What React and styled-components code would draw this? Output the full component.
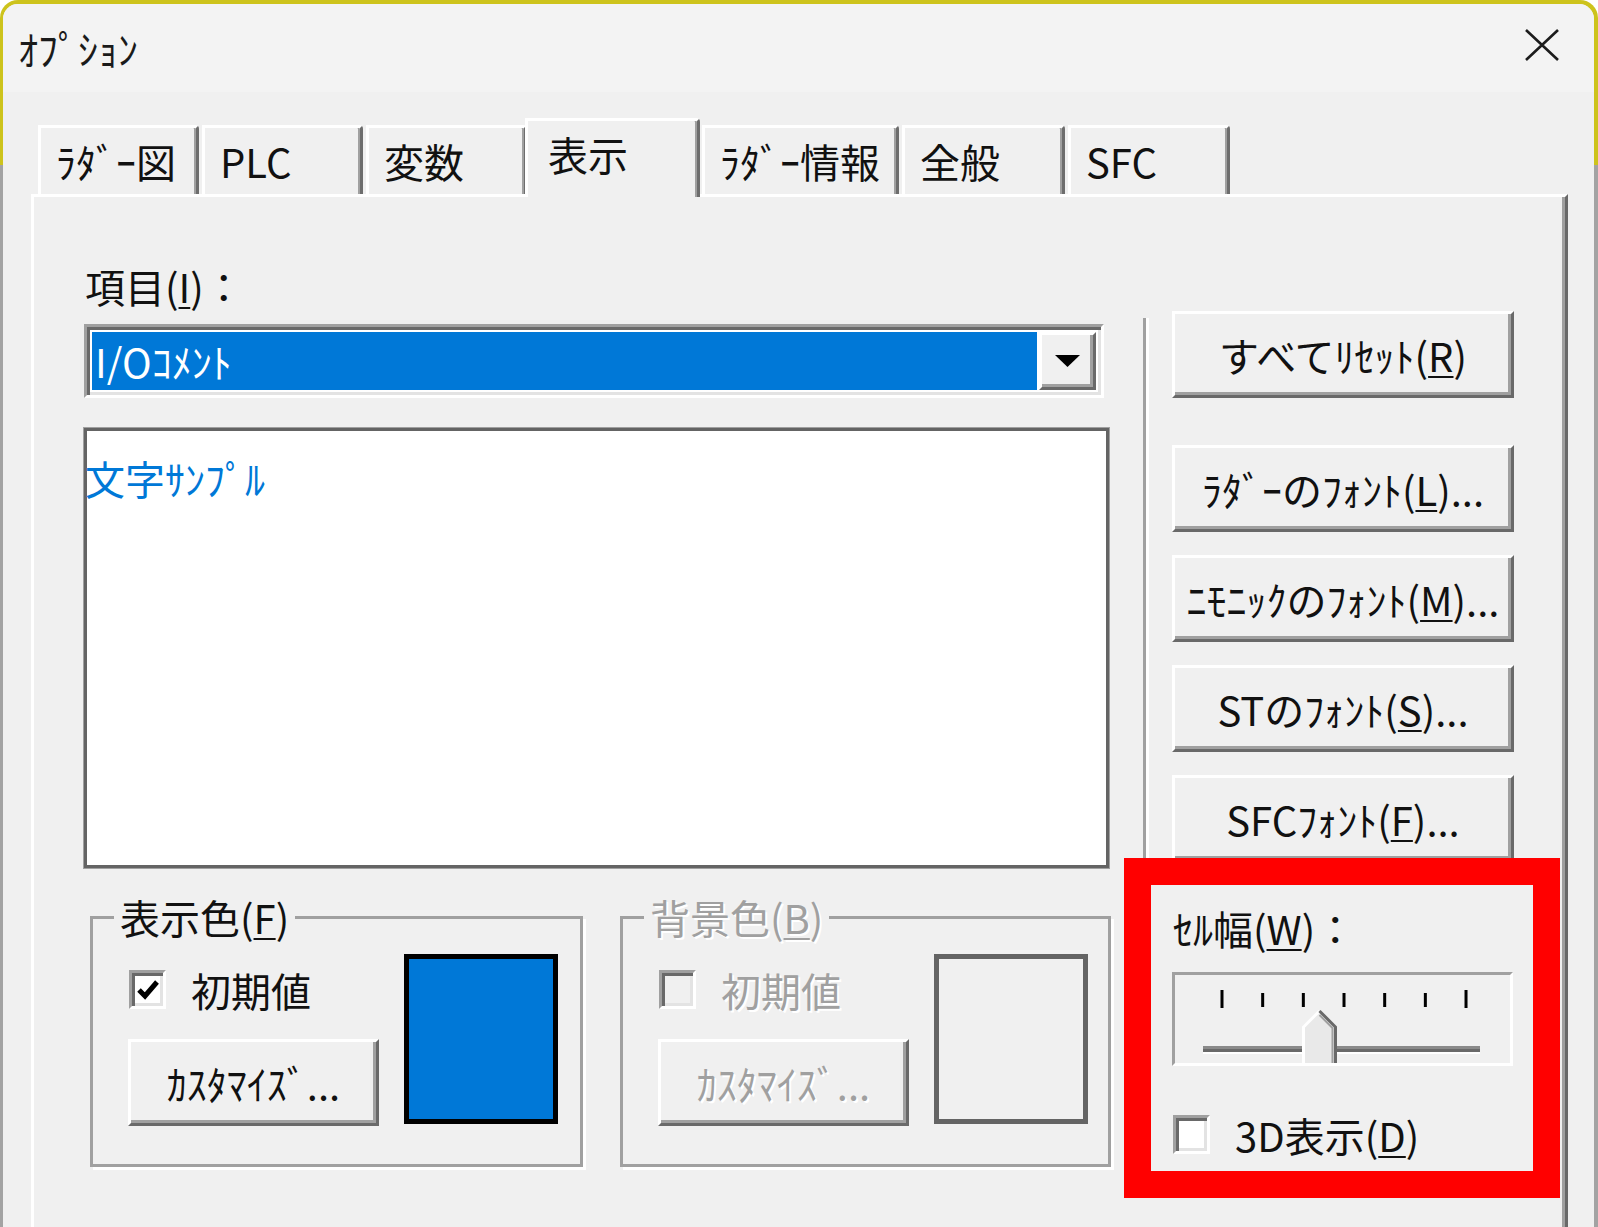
import React from "react";
import styled, { createGlobalStyle, css } from "styled-components";

const FONT = `"Noto Sans CJK JP", "Noto Sans", sans-serif`;

const GlobalStyle = createGlobalStyle`
  * { box-sizing: border-box; }
  html, body { margin: 0; padding: 0; background: #ffffff; }
  body {
    width: 1598px;
    height: 1227px;
    overflow: hidden;
    font-family: ${FONT};
  }
`;

const raised = css`
  border: 3px solid;
  border-color: #ffffff #696969 #696969 #ffffff;
  box-shadow: inset -3px -3px 0 #a0a0a0;
`;

const sunken = css`
  border: 3px solid;
  border-color: #a0a0a0 #ffffff #ffffff #a0a0a0;
  box-shadow: inset 3px 3px 0 #696969, inset -3px -3px 0 #e3e3e3;
`;

const disabledText = css`
  color: #a0a0a0;
  text-shadow: 2px 2px 0 #ffffff;
`;

const Frame = styled.div`
  width: 1598px;
  height: 1227px;
  padding: 4px 4px 0 3px;
  border-radius: 18px 18px 0 0;
  background: linear-gradient(to bottom, #cdc31c 0, #cdc31c 165px, #a3a3a3 165px);
  overflow: hidden;
`;

const Window = styled.div`
  height: 100%;
  background: #f0f0f0;
  border-radius: 15px 15px 0 0;
  overflow: hidden;
  display: flex;
  flex-direction: column;
`;

const TitleBar = styled.div`
  height: 88px;
  flex-shrink: 0;
  display: flex;
  align-items: center;
  justify-content: space-between;
  padding: 0 35px 0 15px;
  background: #f3f3f3;
  color: #1a1a1a;
  font-size: 40px;
  line-height: 1;
`;

const CloseIcon = styled.svg`
  width: 34px;
  height: 32px;
  margin-top: -6px;
`;

const TabStrip = styled.div`
  height: 102px;
  flex-shrink: 0;
  display: flex;
  align-items: flex-end;
  padding-left: 35px;
  position: relative;
  z-index: 1;
`;

const Tab = styled.div`
  width: ${(p) => p.$w}px;
  height: 69px;
  margin-right: 3px;
  padding-left: 15px;
  display: flex;
  align-items: center;
  font-size: 40px;
  line-height: 1;
  color: #111;
  background: #f0f0f0;
  border-top: 3px solid #ffffff;
  border-left: 3px solid #ffffff;
  border-right: 3px solid #6d6d6d;
  border-top-right-radius: 4px;
  box-shadow: inset -2px 0 0 #a0a0a0;
  white-space: nowrap;

  ${(p) =>
    p.$active &&
    css`
      height: 79px;
      margin: 0 2px -3px -5px;
      padding-left: 20px;
      padding-bottom: 10px;
      position: relative;
      z-index: 2;
    `}
`;

const Panel = styled.div`
  margin-left: 28px;
  width: 1537px;
  flex: 1;
  border-top: 3px solid #ffffff;
  border-left: 3px solid #ffffff;
  border-right: 3px solid #696969;
  box-shadow: inset -3px 0 0 #a0a0a0;
  padding-left: 50px;
`;

const TopRow = styled.div`
  display: flex;
  align-items: flex-start;
`;

const LeftCol = styled.div`
  width: 1025px;
  padding-top: 65px;
`;

const FieldLabel = styled.div`
  height: 48px;
  font-size: 40px;
  line-height: 48px;
  color: #111;
  margin-left: 1px;
  white-space: nowrap;

  u {
    text-decoration-thickness: 2px;
    text-underline-offset: 4px;
  }
`;

const Combo = styled.div`
  width: 1020px;
  height: 74px;
  margin-top: 14px;
  display: flex;
  padding: 5px;
  background: #ffffff;
  ${sunken};
`;

const ComboValue = styled.div`
  flex: 1;
  display: flex;
  align-items: center;
  padding-left: 3px;
  background: #0078d7;
  color: #ffffff;
  font-size: 40px;
  line-height: 1;
`;

const DropButton = styled.div`
  width: 57px;
  margin-left: 2px;
  display: flex;
  align-items: center;
  justify-content: center;
  background: #f0f0f0;
  ${raised};
`;

const ListBox = styled.div`
  width: 1025px;
  height: 440px;
  margin-top: 30px;
  background: #ffffff;
  border: 3px solid #646464;
  box-shadow: 0 0 0 1px #a0a0a0;
`;

const SampleText = styled.div`
  padding-top: 23px;
  margin-left: -2px;
  font-size: 40px;
  line-height: 48px;
  color: #0078d7;
`;

const Separator = styled.div`
  width: 6px;
  height: 543px;
  margin: 121px 0 0 34px;
  border-left: 3px solid #a0a0a0;
  border-right: 3px solid #ffffff;
`;

const RightCol = styled.div`
  width: 342px;
  margin-left: 23px;
  padding-top: 114px;
  display: flex;
  flex-direction: column;
  gap: 23px;

  & > :first-child {
    margin-bottom: 24px;
  }
`;

const Button = styled.div`
  width: ${(p) => p.$w || 342}px;
  height: 87px;
  display: flex;
  align-items: center;
  justify-content: center;
  background: #f0f0f0;
  font-size: 40px;
  line-height: 1;
  color: #111;
  white-space: nowrap;
  ${raised};
  ${(p) => p.$disabled && disabledText};

  u {
    text-decoration-thickness: 2px;
    text-underline-offset: 4px;
  }
`;

const BottomRow = styled.div`
  display: flex;
  align-items: flex-start;
`;

const GroupBox = styled.fieldset`
  width: ${(p) => p.$w}px;
  height: 274px;
  margin: 25px 0 0 ${(p) => p.$ml}px;
  padding: 13px 0 0 35px;
  border: 3px solid #a0a0a0;
  box-shadow: 3px 3px 0 #ffffff;
  min-width: 0;
`;

const Legend = styled.legend`
  margin-left: -14px;
  padding: 0 6px;
  font-size: 40px;
  line-height: 48px;
  color: #111;
  ${(p) => p.$disabled && disabledText};

  u {
    text-decoration-thickness: 2px;
    text-underline-offset: 4px;
  }
`;

const GroupInner = styled.div`
  display: flex;
  align-items: flex-start;
`;

const GroupStack = styled.div`
  width: 251px;
  padding-top: 16px;
  display: flex;
  flex-direction: column;
  gap: 30px;
`;

const CheckRow = styled.div`
  height: 39px;
  display: flex;
  align-items: center;
  margin-left: 1px;
`;

const CheckBox = styled.div`
  width: 37px;
  height: 39px;
  flex-shrink: 0;
  display: flex;
  align-items: center;
  justify-content: center;
  background: ${(p) => (p.$disabled ? "#f0f0f0" : "#ffffff")};
  ${sunken};
`;

const CheckLabel = styled.span`
  margin-left: 25px;
  font-size: 40px;
  line-height: 1;
  color: #111;
  white-space: nowrap;
  ${(p) => p.$disabled && disabledText};

  u {
    text-decoration-thickness: 2px;
    text-underline-offset: 4px;
  }
`;

const Swatch = styled.div`
  width: 154px;
  height: 170px;
  margin-left: 25px;
  background: ${(p) => p.$fill};
  border: 5px solid ${(p) => p.$edge};
`;

const CellGroup = styled.div`
  width: 341px;
  margin: 36px 0 0 61px;
  position: relative;

  &::after {
    content: "";
    position: absolute;
    top: -46px;
    left: -48px;
    right: -47px;
    bottom: -44px;
    border: 27px solid #ff0000;
    pointer-events: none;
  }
`;

const Trackbar = styled.div`
  width: 341px;
  height: 94px;
  margin-top: 20px;
  border: 3px solid;
  border-color: #a0a0a0 #ffffff #ffffff #a0a0a0;

  svg {
    display: block;
  }
`;

const CellCheckRow = styled(CheckRow)`
  margin-top: 49px;
`;

const tabs = [
  { label: "ﾗﾀﾞｰ図", w: 161 },
  { label: "PLC", w: 161 },
  { label: "変数", w: 161 },
  { label: "表示", w: 175, active: true },
  { label: "ﾗﾀﾞｰ情報", w: 197 },
  { label: "全般", w: 163 },
  { label: "SFC", w: 162 },
];

const fontButtons = [
  { pre: "すべてﾘｾｯﾄ(", key: "R", post: ")" },
  { pre: "ﾗﾀﾞｰのﾌｫﾝﾄ(", key: "L", post: ")..." },
  { pre: "ﾆﾓﾆｯｸのﾌｫﾝﾄ(", key: "M", post: ")..." },
  { pre: "STのﾌｫﾝﾄ(", key: "S", post: ")..." },
  { pre: "SFCﾌｫﾝﾄ(", key: "F", post: ")..." },
];

const Check = () => (
  <svg width="24" height="22" viewBox="0 0 24 22">
    <path d="M3 11 L9 17 L21 3" fill="none" stroke="#000" strokeWidth="5" />
  </svg>
);

const ColorGroup = ({ title, hotkey, checked, disabled, fill, edge, ml, w }) => (
  <GroupBox $ml={ml} $w={w}>
    <Legend $disabled={disabled}>
      {title}(<u>{hotkey}</u>)
    </Legend>
    <GroupInner>
      <GroupStack>
        <CheckRow>
          <CheckBox $disabled={disabled}>{checked && <Check />}</CheckBox>
          <CheckLabel $disabled={disabled}>初期値</CheckLabel>
        </CheckRow>
        <Button $w={251} $disabled={disabled}>
          ｶｽﾀﾏｲｽﾞ...
        </Button>
      </GroupStack>
      <Swatch $fill={fill} $edge={edge} />
    </GroupInner>
  </GroupBox>
);

const ticks = [0, 1, 2, 3, 4, 5, 6].map((i) => 47 + i * 40.67);

const SliderDrawing = () => (
  <svg width="335" height="88" viewBox="0 0 335 88">
    {ticks.map((x, i) => {
      const long = i === 0 || i === ticks.length - 1;
      return (
        <rect
          key={i}
          x={x - 1.5}
          y={long ? 15 : 18}
          width="3"
          height={long ? 18 : 14}
          fill="#000"
        />
      );
    })}
    <rect x="28" y="71" width="277" height="3" fill="#8a8a8a" />
    <rect x="28" y="74" width="277" height="3" fill="#696969" />
    <rect x="28" y="77" width="277" height="2" fill="#ffffff" />
    <polygon points="127,52 144.5,35 162,52 162,88 127,88" fill="#e9e9e9" />
    <polyline points="128.5,88 128.5,52 144.5,36" fill="none" stroke="#ffffff" strokeWidth="3" />
    <polyline points="144.5,36 160.5,52 160.5,88" fill="none" stroke="#696969" strokeWidth="3" />
    <polyline points="144.5,40 157.5,53 157.5,88" fill="none" stroke="#a0a0a0" strokeWidth="2" />
  </svg>
);

const App = () => {
  return (
    <>
      <GlobalStyle />
      <Frame>
        <Window>
          <TitleBar>
            <span>ｵﾌﾟｼｮﾝ</span>
            <CloseIcon viewBox="0 0 34 32">
              <path d="M1 1 L33 31 M33 1 L1 31" stroke="#1c1c1c" strokeWidth="2.6" fill="none" />
            </CloseIcon>
          </TitleBar>

          <TabStrip>
            {tabs.map((t) => (
              <Tab key={t.label} $w={t.w} $active={t.active}>
                {t.label}
              </Tab>
            ))}
          </TabStrip>

          <Panel>
            <TopRow>
              <LeftCol>
                <FieldLabel>
                  項目(<u>I</u>)：
                </FieldLabel>
                <Combo>
                  <ComboValue>I/Oｺﾒﾝﾄ</ComboValue>
                  <DropButton>
                    <svg width="25" height="12" viewBox="0 0 25 12">
                      <polygon points="0,0 25,0 12.5,12" fill="#000" />
                    </svg>
                  </DropButton>
                </Combo>
                <ListBox>
                  <SampleText>文字ｻﾝﾌﾟﾙ</SampleText>
                </ListBox>
              </LeftCol>

              <Separator />

              <RightCol>
                {fontButtons.map((b) => (
                  <Button key={b.key}>
                    {b.pre}
                    <u>{b.key}</u>
                    {b.post}
                  </Button>
                ))}
              </RightCol>
            </TopRow>

            <BottomRow>
              <ColorGroup
                title="表示色"
                hotkey="F"
                checked
                fill="#0078d7"
                edge="#000000"
                ml={6}
                w={493}
              />
              <ColorGroup
                title="背景色"
                hotkey="B"
                disabled
                fill="#f0f0f0"
                edge="#646464"
                ml={37}
                w={491}
              />
              <CellGroup>
                <FieldLabel>
                  ｾﾙ幅(<u>W</u>)：
                </FieldLabel>
                <Trackbar>
                  <SliderDrawing />
                </Trackbar>
                <CellCheckRow>
                  <CheckBox />
                  <CheckLabel>
                    3D表示(<u>D</u>)
                  </CheckLabel>
                </CellCheckRow>
              </CellGroup>
            </BottomRow>
          </Panel>
        </Window>
      </Frame>
    </>
  );
};

export default App;
